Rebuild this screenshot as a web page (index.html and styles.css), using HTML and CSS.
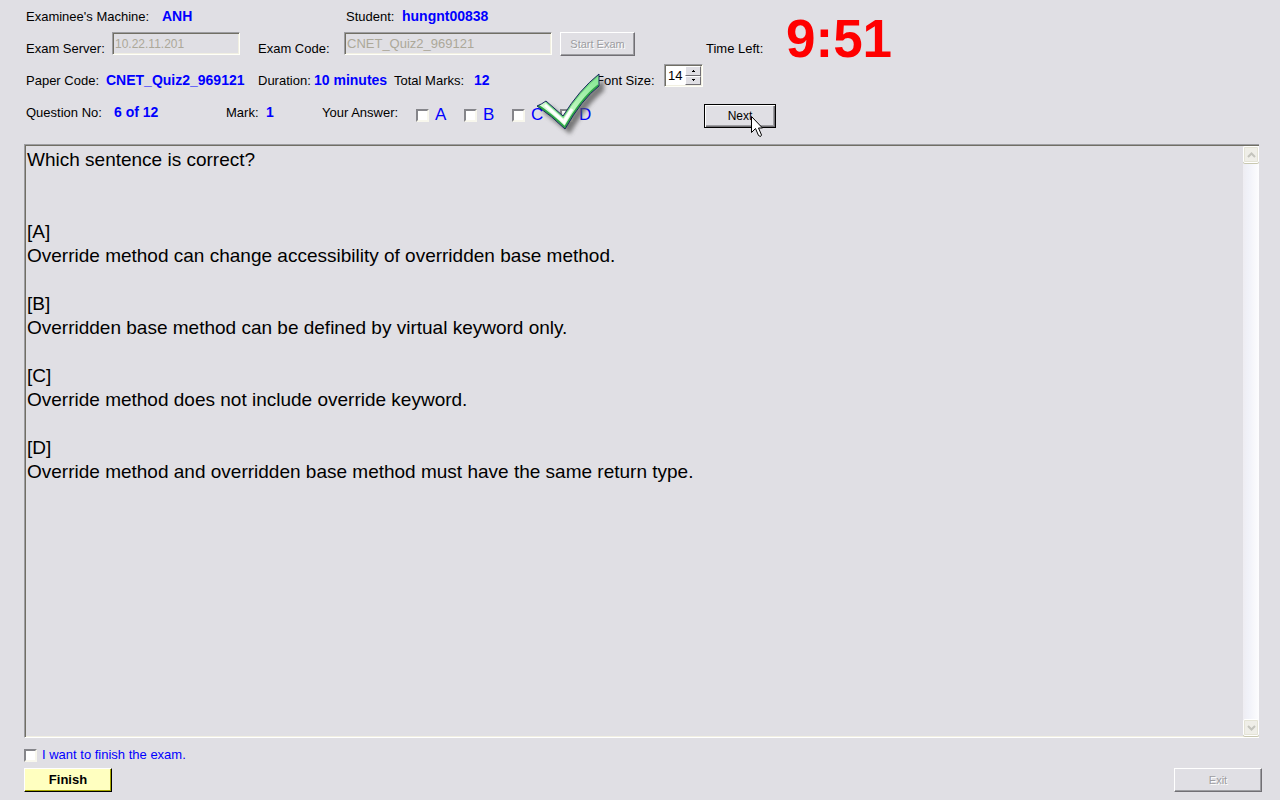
FILE: index.html
```html
<!DOCTYPE html>
<html lang="en">
<head>
<meta charset="utf-8">
<title>Exam Client</title>
<link rel="stylesheet" href="styles.css">
</head>
<body>
<form class="exam">
  <header class="header">
    <div class="top">
      <div class="top-fields">
        <div class="row row-machine">
          <span>Examinee's Machine:</span><b class="value">ANH</b>
          <span>Student:</span><b class="value">hungnt00838</b>
        </div>
        <div class="row row-server">
          <label for="server">Exam Server:</label>
          <input class="field field-small" id="server" type="text" value="10.22.11.201" disabled>
          <label for="code">Exam Code:</label>
          <input class="field" id="code" type="text" value="CNET_Quiz2_969121" disabled>
          <button class="button" type="button" disabled>Start Exam</button>
        </div>
      </div>
      <div class="time">
        <span class="time-label">Time Left:</span>
        <strong class="timer">9:51</strong>
      </div>
    </div>
    <div class="row row-paper">
      <span>Paper Code:</span><b class="value">CNET_Quiz2_969121</b>
      <span>Duration:</span><b class="value">10 minutes</b>
      <span>Total Marks:</span><b class="value">12</b>
      <label for="size">Font Size:</label>
      <div class="spinner">
        <input class="spinner-input" id="size" type="text" value="14">
        <div class="spinner-buttons">
          <button class="step" type="button" aria-label="Increase"><svg width="3" height="2" viewBox="0 0 3 2" shape-rendering="crispEdges"><path d="M1 0h1v1h1v1H0V1h1z"/></svg></button>
          <button class="step" type="button" aria-label="Decrease"><svg width="3" height="2" viewBox="0 0 3 2" shape-rendering="crispEdges"><path d="M0 0h3v1H2v1H1V1H0z"/></svg></button>
        </div>
      </div>
    </div>
    <div class="row row-question">
      <span>Question No:</span><b class="value">6 of 12</b>
      <span>Mark:</span><b class="value">1</b>
      <span>Your Answer:</span>
      <div class="answers">
        <label class="answer"><input class="check" type="checkbox">A</label>
        <label class="answer"><input class="check" type="checkbox">B</label>
        <label class="answer"><input class="check" type="checkbox">C</label>
        <label class="answer"><input class="check" type="checkbox">D</label>
        <svg class="tick" width="84" height="72" viewBox="0 0 84 72" aria-hidden="true">
          <defs>
            <linearGradient id="tickFill" gradientUnits="userSpaceOnUse" x1="60" y1="8" x2="30" y2="58">
              <stop offset="0" stop-color="#8be897"/><stop offset=".5" stop-color="#b4f5b6"/><stop offset="1" stop-color="#e4fde2"/>
            </linearGradient>
            <clipPath id="tickClip"><path d="M5 36Q10 34 14 31L31 46Q47 20 67 4V16Q50 29 33 59Q20 46 5 36Z"/></clipPath>
            <filter id="soft" x="-20%" y="-20%" width="150%" height="150%"><feGaussianBlur stdDeviation="2"/></filter>
          </defs>
          <path d="M5 36 14 31 31 46Q47 20 67 4V16Q50 29 33 59Z" transform="translate(5 5)" fill="#555" opacity=".75" filter="url(#soft)"/>
          <path d="M5 36Q10 34 14 31L31 46Q47 20 67 4V16Q50 29 33 59Q20 46 5 36Z" fill="url(#tickFill)"/>
          <g clip-path="url(#tickClip)" fill="none">
            <path d="M5 36Q20 46 33 59Q50 29 67 16" stroke="#2fa648" stroke-width="4"/>
            <path d="M14 31 31 46Q47 20 67 4" stroke="#6fd47f" stroke-width="3"/>
            <path d="M13 35 32 52Q36 45 40 39" stroke="#fff" stroke-width="3"/>
          </g>
          <path d="M5 36Q10 34 14 31L31 46Q47 20 67 4V16Q50 29 33 59Q20 46 5 36Z" fill="none" stroke="#17265f"/>
        </svg>
      </div>
      <button class="button next" type="button">Next<svg class="cursor" width="12" height="21" viewBox="0 0 12 21" aria-hidden="true"><path d="M.5.5V16.5L4.5 12.5 7.5 19.5 9.5 20.5 10.5 19 7.5 12H11.5Z" fill="#fff" stroke="#000"/></svg></button>
    </div>
  </header>
  <main class="question">
    <textarea class="question-text" aria-label="Question" readonly>Which sentence is correct?


[A]
Override method can change accessibility of overridden base method.

[B]
Overridden base method can be defined by virtual keyword only.

[C]
Override method does not include override keyword.

[D]
Override method and overridden base method must have the same return type.</textarea>
    <div class="scrollbar">
      <button class="scroll-button" type="button" aria-label="Scroll up" disabled><svg width="9" height="6" viewBox="0 0 9 6"><path d="M1 5 4.500 1.500 8 5" fill="none" stroke="#c4c4bd" stroke-width="2"/></svg></button>
      <button class="scroll-button" type="button" aria-label="Scroll down" disabled><svg width="9" height="6" viewBox="0 0 9 6"><path d="M1 1 4.500 4.500 8 1" fill="none" stroke="#c4c4bd" stroke-width="2"/></svg></button>
    </div>
  </main>
  <footer class="footer">
    <label class="confirm"><input class="check" type="checkbox">I want to finish the exam.</label>
    <div class="actions">
      <button class="button finish" type="button">Finish</button>
      <button class="button exit" type="button" disabled>Exit</button>
    </div>
  </footer>
</form>
</body>
</html>
```

FILE: styles.css
```css
* { box-sizing: border-box; }

body {
  margin: 0;
  background: #e0dfe4;
  color: #000;
  font: 13px/16px "Liberation Sans", Arial, sans-serif;
}

button, input, textarea { font: inherit; margin: 0; border-radius: 0; }

.exam { display: flex; flex-direction: column; min-height: 100vh; }
.header { padding-bottom: 16px; white-space: nowrap; }
.top { display: flex; }

.row { display: grid; align-items: center; height: 32px; padding-left: 26px; }
.row > span, .row > label { padding-top: 2px; }
.row-machine { grid-template-columns: 136px 184px 56px auto; }
.row-server { grid-template-columns: 86px 146px 86px 216px 75px; align-items: start; }
.row-paper { grid-template-columns: 80px 152px 56px 80px 80px 122px 68px 39px; }
.row-question { grid-template-columns: 88px 112px 40px 56px 94px 288px 72px; }

.value { color: #0000ff; font-size: 14px; }

.field, .spinner {
  height: 23px;
  border: 1px solid;
  border-color: #9d9da1 #fffff8 #fffff8 #9d9da1;
  box-shadow: inset 1px 1px #716f64, inset -1px -1px #f1efe2;
}
.field {
  width: 208px;
  padding: 0 2px;
  background: transparent;
  color: #aca899;
}
.row-server > label { padding-top: 9px; }
.field-small { width: 128px; font-size: 12px; }

.button {
  height: 24px;
  padding: 0;
  border: 1px solid;
  border-color: #fff #716f74 #716f74 #fff;
  box-shadow: inset -1px -1px #9d9da1;
  background: #e0dfe4;
  color: #000;
  font-size: 12px;
  line-height: 16px;
}
.button:disabled { color: #9d9da1; font-size: 11px; text-shadow: 1px 1px #fff; }

.time { display: flex; align-items: flex-start; margin-left: 71px; }
.time-label { width: 80px; padding-top: 41px; }
.timer { height: 64px; padding-top: 9px; color: #ff0000; font-size: 53px; line-height: 60px; }

.spinner {
  display: flex;
  align-self: start;
  padding: 1px;
  background: #fff;
}
.spinner-input { flex: 1; min-width: 0; padding: 0 0 0 2px; border: 0; background: transparent; }
.spinner-buttons { display: grid; grid-template-rows: 1fr 1fr; width: 16px; }
.step {
  display: grid;
  place-content: center;
  padding: 0;
  border: 1px solid;
  border-color: #fff #716f74 #716f74 #fff;
  background: #e0dfe4;
}
.step svg { display: block; }

.check {
  appearance: none;
  flex: none;
  width: 13px;
  height: 13px;
  border: 2px solid;
  border-color: #85858a #f8f7ed #f8f7ed #85858a;
  background: #fff;
}
.answers { position: relative; display: flex; padding-top: 6px; }
.answer {
  display: flex;
  align-items: center;
  gap: 6px;
  width: 48px;
  color: #0000ff;
  font-size: 17px;
}
.tick { position: absolute; left: 116px; top: -31px; }

.next {
  position: relative;
  border-color: #000;
  box-shadow: inset 1px 1px #fff, inset -1px -1px #716f74, inset -2px -2px #9d9da1;
}
.row-question .next { margin-top: 8px; }
.cursor { position: absolute; left: 46px; top: 11px; }

.question {
  display: flex;
  flex: 1;
  margin: 0 21px 0 24px;
  padding: 1px 0 1px 1px;
  border: solid;
  border-width: 1px 0 1px 1px;
  border-color: #9d9da1 #fffff8 #fff #9d9da1;
  box-shadow: inset 1px 1px #716f64, inset 0 -1px #f1efe2;
}
.question-text {
  flex: 1;
  padding: 2px 1px;
  border: 0;
  outline: 0;
  resize: none;
  overflow: hidden;
  background: transparent;
  color: #000;
  font-size: 19px;
  line-height: 24px;
}
.scrollbar {
  display: flex;
  flex-direction: column;
  justify-content: space-between;
  width: 16px;
  background: linear-gradient(to right, #eeedf2, #f0f1f8 30%, #fdfdfe);
}
.scroll-button {
  display: grid;
  place-content: center;
  height: 17px;
  padding: 0;
  border: 1px solid #fff;
  border-radius: 2px;
  outline: 1px solid #e4e3d5;
  outline-offset: -2px;
  box-shadow: 0 1px #c9c8b0;
  background: #efeee8;
}

.footer { padding: 9px 18px 8px 24px; }
.confirm { display: flex; align-items: center; gap: 5px; width: max-content; height: 16px; color: #0000ff; }
.actions { display: flex; justify-content: space-between; padding-top: 5px; }
.finish, .exit { width: 88px; }
.finish {
  border-color: #fff #000 #000 #fff;
  box-shadow: inset -1px -1px #a8a800;
  background: #ffffc0;
  font-size: 13px;
  font-weight: bold;
}
```
